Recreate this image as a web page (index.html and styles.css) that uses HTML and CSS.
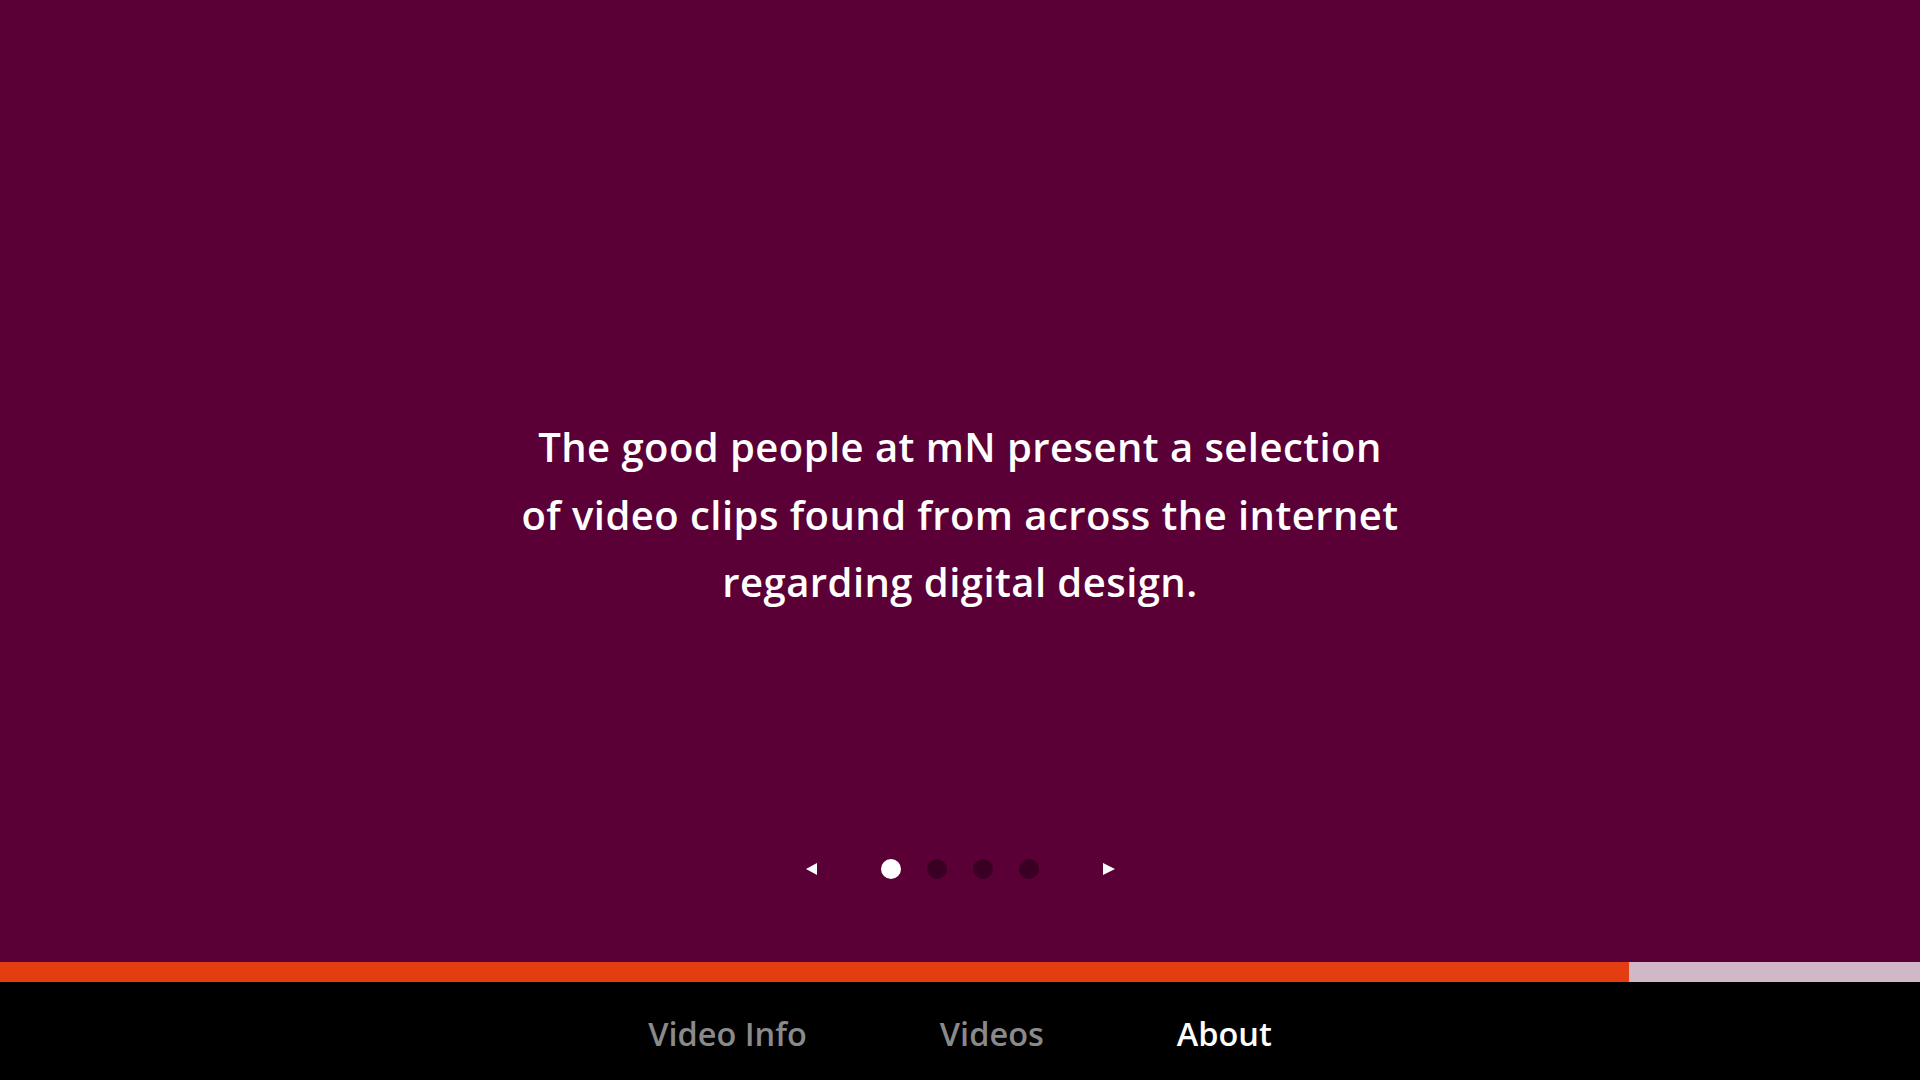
FILE: index.html
```html
<!DOCTYPE html>
<html lang="en">
<head>
<meta charset="utf-8">
<title>About</title>
<link rel="stylesheet" href="styles.css">
</head>
<body>
<div class="app">
  <main class="stage">
    <p class="intro">The good people at mN present a selection<br>of video clips found from across the internet<br>regarding digital design.</p>
    <div class="pager">
      <span class="arrow arrow-left"></span>
      <div class="dots">
        <span class="dot active"></span>
        <span class="dot"></span>
        <span class="dot"></span>
        <span class="dot"></span>
      </div>
      <span class="arrow arrow-right"></span>
    </div>
  </main>
  <div class="progress"><div class="progress-fill"></div></div>
  <nav class="tabs">
    <span class="tab">Video Info</span>
    <span class="tab">Videos</span>
    <span class="tab current">About</span>
  </nav>
</div>
</body>
</html>
```

FILE: styles.css
```css
html, body {
  margin: 0;
  padding: 0;
  height: 100%;
}
body {
  font-family: "Open Sans", "Noto Sans", sans-serif;
  background: #000;
  overflow: hidden;
}
.app {
  display: flex;
  flex-direction: column;
  height: 100vh;
}
.stage {
  flex: 1;
  background: #5a0036;
  display: flex;
  flex-direction: column;
  align-items: center;
  padding-top: 413px;
  box-sizing: border-box;
}
.intro {
  margin: 0;
  color: #fff;
  font-size: 40px;
  font-weight: 600;
  letter-spacing: 0.45px;
  line-height: 67.5px;
  text-align: center;
}
.pager {
  margin-top: 243px;
  display: flex;
  align-items: center;
  gap: 64px;
  height: 20px;
}
.dots {
  display: flex;
  gap: 26px;
}
.dot {
  width: 20px;
  height: 20px;
  border-radius: 50%;
  background: rgba(0, 0, 0, 0.35);
}
.dot.active {
  background: #fff;
}
.arrow {
  width: 0;
  height: 0;
  border-top: 6.5px solid transparent;
  border-bottom: 6.5px solid transparent;
}
.arrow-left {
  border-right: 11px solid #fff;
}
.arrow-right {
  border-left: 12px solid #fff;
}
.progress {
  height: 20px;
  background: #d1b8c6;
}
.progress-fill {
  width: 84.85%;
  height: 100%;
  background: #e43d12;
}
.tabs {
  height: 98px;
  background: #000;
  display: flex;
  justify-content: center;
  align-items: flex-start;
  gap: 133px;
  padding-top: 30px;
  box-sizing: border-box;
}
.tab {
  font-size: 32.5px;
  font-weight: 600;
  color: #8a8a8a;
  line-height: 43px;
}
.tab.current {
  color: #fff;
}
```
